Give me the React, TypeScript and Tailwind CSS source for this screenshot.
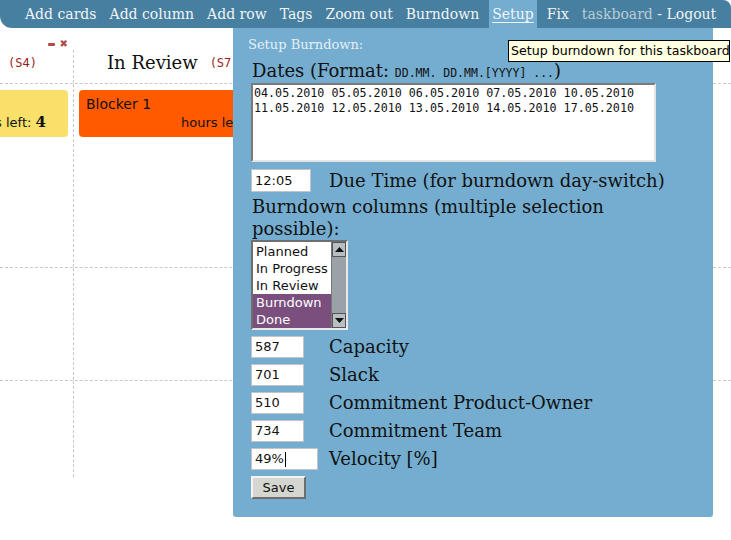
import React from 'react';

const navItems = ['Add cards', 'Add column', 'Add row', 'Tags', 'Zoom out', 'Burndown'];

const columnsList = [
  { name: 'Planned', selected: false },
  { name: 'In Progress', selected: false },
  { name: 'In Review', selected: false },
  { name: 'Burndown', selected: true },
  { name: 'Done', selected: true },
];

const numberFields = [
  { value: '587', label: 'Capacity', wide: false },
  { value: '701', label: 'Slack', wide: false },
  { value: '510', label: 'Commitment Product-Owner', wide: false },
  { value: '734', label: 'Commitment Team', wide: false },
  { value: '49%', label: 'Velocity [%]', wide: true },
];

const App: React.FC = () => {
  return (
    <div className="relative w-[731px] h-[540px] bg-white overflow-hidden font-['DejaVu_Serif',serif]">
      {/* Top menu */}
      <nav className="h-[28px] bg-[#467fa0] rounded-bl-[12px] rounded-tr-[8px] flex items-stretch pl-[22px] gap-[7px] text-[14px] text-[#f2f5f7]">
        {navItems.map((item) => (
          <span key={item} className="px-[3px] flex items-center">
            {item}
          </span>
        ))}
        <span className="px-[3px] flex items-center bg-[#74adcf] underline underline-offset-[3px]">Setup</span>
        <span className="px-[3px] flex items-center">Fix</span>
        <span className="px-[3px] flex items-center">
          <span className="text-[#bccbd6]">taskboard</span>&nbsp;- Logout
        </span>
      </nav>

      {/* Board behind the panel */}
      <div className="flex flex-col">
        <div className="flex h-[55px]">
          <div className="w-[74px] flex flex-col">
            <div className="h-[22px] flex items-end justify-end gap-[5px] pr-[6px] pb-[1px]">
              <span className="w-[7px] h-[3px] bg-[#b44a4a] rounded-[1px] mb-[3px]" />
              <span className="text-[#b44a4a] text-[10px] leading-none font-bold font-['DejaVu_Sans',sans-serif]">✖</span>
            </div>
            <div className="flex-1 border-r border-dashed border-[#c8c8c8] flex items-start pl-[8px] pt-[4px] text-[12px] text-[#9b1c1c] font-['DejaVu_Sans_Mono',monospace]">
              (S4)
            </div>
          </div>
          <div className="flex-1 flex items-center pt-[14px] pl-[33px]">
            <span className="text-[18px] text-[#111]">In Review</span>
            <span className="ml-[12px] text-[12px] text-[#9b1c1c] font-['DejaVu_Sans_Mono',monospace]">(S7)</span>
          </div>
        </div>

        <div className="flex h-[184px] border-t border-dashed border-[#c8c8c8]">
          <div className="w-[74px] border-r border-dashed border-[#c8c8c8] pt-[6px] pr-[5px]">
            <div className="ml-[-90px] h-[47px] bg-[#f8e06a] rounded-[4px] flex flex-col justify-end items-end pr-[22px] pb-[4px] text-[13px] font-['DejaVu_Sans',sans-serif] text-[#111]">
              <span>
                hours left: <span className="font-['DejaVu_Serif',serif] font-bold text-[15px]">4</span>
              </span>
            </div>
          </div>
          <div className="flex-1 pt-[6px] pl-[5px]">
            <div className="w-[200px] h-[47px] bg-[#ff5a00] rounded-[4px] pl-[7px] pt-[6px] font-['DejaVu_Sans',sans-serif] text-[#111]">
              <div className="text-[14px] leading-[16px]">Blocker 1</div>
              <div className="text-[13px] leading-[16px] pl-[95px] pt-[3px]">hours left: 3</div>
            </div>
          </div>
        </div>

        <div className="flex h-[113px] border-t border-dashed border-[#c8c8c8]">
          <div className="w-[74px] border-r border-dashed border-[#c8c8c8]" />
          <div className="flex-1" />
        </div>

        <div className="flex h-[97px] border-t border-dashed border-[#c8c8c8]">
          <div className="w-[74px] border-r border-dashed border-[#c8c8c8]" />
          <div className="flex-1" />
        </div>
      </div>

      {/* Setup burndown panel */}
      <div className="absolute left-[233px] top-[28px] w-[480px] h-[489px] bg-[#74adcf] rounded-b-[3px] pl-[18px] pt-[9px] text-[#111]">
        <div className="-ml-[3px] h-[16px] text-[13px] leading-[16px] text-[#e6eff5]">Setup Burndown:</div>
        <div className="mt-[7px] h-[21px] flex items-baseline text-[18px] leading-[21px] pl-[1px] whitespace-pre">
          <span>Dates (Format: </span>
          <span className="font-['DejaVu_Sans_Mono',monospace] text-[11.5px] leading-none">DD.MM. DD.MM.[YYYY] ...</span>
          <span>)</span>
        </div>
        <div className="w-[405px] h-[79px] mt-[2px] bg-white border-2 border-t-[#7a7a7a] border-l-[#7a7a7a] border-r-[#e4e4e4] border-b-[#e4e4e4] px-[1px] pt-[1px] font-['DejaVu_Sans_Mono',monospace] text-[11.7px] leading-[15px] whitespace-pre">
          {'04.05.2010 05.05.2010 06.05.2010 07.05.2010 10.05.2010\n11.05.2010 12.05.2010 13.05.2010 14.05.2010 17.05.2010'}
        </div>

        <div className="flex items-center mt-[7px] h-[23px]">
          <div className="w-[60px] h-[23px] bg-white border border-[#c4c4c4] flex items-center pl-[3px] font-['DejaVu_Sans',sans-serif] text-[13px]">
            12:05
          </div>
          <span className="ml-[18px] text-[18px] leading-[22px]">Due Time (for burndown day-switch)</span>
        </div>

        <div className="mt-[4px] text-[18px] leading-[22px] pl-[1px] w-[420px]">
          Burndown columns (multiple selection possible):
        </div>

        <div className="w-[97px] h-[90px] flex bg-white border-2 border-t-[#6e6e6e] border-l-[#6e6e6e] border-r-[#e8e8e8] border-b-[#e8e8e8] font-['DejaVu_Sans',sans-serif] text-[13px]">
          <div className="flex-1 pt-[1px]">
            {columnsList.map((c) => (
              <div
                key={c.name}
                className={`h-[17px] leading-[17px] pl-[3px] ${c.selected ? 'bg-[#7a4f7d] text-white' : 'text-[#111]'}`}
              >
                {c.name}
              </div>
            ))}
          </div>
          <div className="w-[15px] bg-[#9aa1a7] border-l border-[#777] flex flex-col justify-between">
            <div className="h-[15px] bg-[#b9bec2] border border-[#555] flex items-center justify-center">
              <svg width="9" height="5" viewBox="0 0 9 5">
                <polygon points="0,5 4.5,0 9,5" fill="#111" />
              </svg>
            </div>
            <div className="h-[15px] bg-[#b9bec2] border border-[#555] flex items-center justify-center">
              <svg width="9" height="5" viewBox="0 0 9 5">
                <polygon points="0,0 4.5,5 9,0" fill="#111" />
              </svg>
            </div>
          </div>
        </div>

        <div className="mt-[6px] flex flex-col gap-[6px]">
          {numberFields.map((f) => (
            <div key={f.label} className="flex items-center h-[22px]">
              <div
                className={`${f.wide ? 'w-[67px]' : 'w-[53px]'} h-[22px] bg-white border border-[#c4c4c4] flex items-center pl-[3px] font-['DejaVu_Sans',sans-serif] text-[13px]`}
              >
                {f.value}
                {f.wide && <span className="w-px h-[15px] bg-black ml-[1px]" />}
              </div>
              <span className={`${f.wide ? 'ml-[11px]' : 'ml-[25px]'} text-[18px] leading-[22px]`}>{f.label}</span>
            </div>
          ))}
        </div>

        <button className="mt-[6px] w-[55px] h-[23px] bg-[#d5d6cf] border-2 border-t-[#f4f4f4] border-l-[#f4f4f4] border-r-[#6e6e6e] border-b-[#6e6e6e] font-['DejaVu_Sans',sans-serif] text-[13px] text-[#111] flex items-center justify-center">
          Save
        </button>
      </div>

      {/* Tooltip */}
      <div className="absolute left-[508px] top-[40px] w-[222px] h-[22px] bg-[#ffffe1] border border-black flex items-center pl-[2px] font-['DejaVu_Sans',sans-serif] text-[12.6px] text-black whitespace-nowrap">
        Setup burndown for this taskboard
      </div>
    </div>
  );
};

export default App;
